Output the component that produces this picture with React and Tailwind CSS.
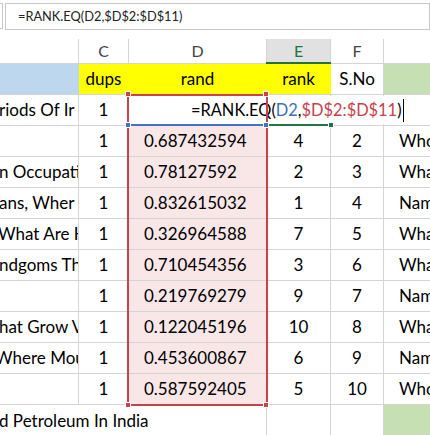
import React from 'react';

const rows = [
  { a: 'riods Of Ir', c: '1', d: '', e: '', f: '', g: '', ml: '-ml-[1px]' },
  { a: '', c: '1', d: '0.687432594', e: '4', f: '2', g: 'Who', ml: '' },
  { a: 'n Occupati', c: '1', d: '0.78127592', e: '2', f: '3', g: 'Wha', ml: '-ml-[1px]' },
  { a: 'ans, Wher', c: '1', d: '0.832615032', e: '1', f: '4', g: 'Nam', ml: '-ml-[1px]' },
  { a: 'What Are H', c: '1', d: '0.326964588', e: '7', f: '5', g: 'Wha', ml: '-ml-[2px]' },
  { a: 'ndgoms Th', c: '1', d: '0.710454356', e: '3', f: '6', g: 'Wha', ml: '-ml-[1px]' },
  { a: '', c: '1', d: '0.219769279', e: '9', f: '7', g: 'Nam', ml: '' },
  { a: 'hat Grow V', c: '1', d: '0.122045196', e: '10', f: '8', g: 'Wha', ml: '-ml-[1px]' },
  { a: 'Where Mou', c: '1', d: '0.453600867', e: '6', f: '9', g: 'Nam', ml: '-ml-[5px]' },
  { a: '', c: '1', d: '0.587592405', e: '5', f: '10', g: 'Who', ml: '' },
];

const Handle = ({ className }) => (
  <div className={`absolute w-[6px] h-[6px] border border-white ${className}`} />
);

export default function App() {
  return (
    <div
      className="relative w-[430px] h-[435px] overflow-hidden bg-white text-black"
      style={{ fontFamily: 'Lato, "Open Sans", sans-serif' }}
    >
      {/* formula bar */}
      <div className="h-[39px] flex pt-[3px]">
        <div className="w-[3px] h-[26px] border-r border-y border-[#c6c6c6] bg-white" />
        <div className="ml-[2px] flex-1 h-[27px] border border-[#c6c6c6] flex items-center pl-[12px] text-[12.8px] text-[#222]">
          =RANK.EQ(D2,$D$2:$D$11)
        </div>
      </div>

      {/* column headers */}
      <div className="flex h-[25px] border-b border-[#d4d4d4] text-[16px] text-[#444]">
        <div className="w-[79px] border-r border-[#d4d4d4]" />
        <div className="w-[50px] border-r border-[#d4d4d4] flex items-center justify-center">C</div>
        <div className="w-[138px] border-r border-[#d4d4d4] flex items-center justify-center">D</div>
        <div className="w-[64px] border-r border-[#d4d4d4] bg-[#e1e1e1] flex items-center justify-center text-[#217346]">E</div>
        <div className="w-[53px] border-r border-[#d4d4d4] flex items-center justify-center">F</div>
        <div className="flex-1" />
      </div>

      {/* header row */}
      <div className="flex h-[31px] border-b border-[#d4d4d4] text-[17px]">
        <div className="w-[79px] bg-[#bdd7ee] border-r border-[#bdd7ee]" />
        <div className="w-[50px] bg-[#ffff00] border-r border-[#ffff00] flex items-center justify-center">dups</div>
        <div className="w-[138px] bg-[#ffff00] border-r border-[#ffff00] flex items-center justify-center">rand</div>
        <div className="w-[64px] bg-[#ffff00] border-r border-[#ffff00] flex items-center justify-center">rank</div>
        <div className="w-[53px] border-r border-[#d4d4d4] flex items-center justify-center">S.No</div>
        <div className="flex-1 bg-[#c6e0b4]" />
      </div>

      {/* data rows */}
      {rows.map((r, i) => (
        <div key={i} className="flex h-[31px] border-b border-[#d4d4d4] text-[17px]">
          <div className="w-[79px] border-r border-[#d4d4d4] overflow-hidden whitespace-nowrap flex items-center">
            <span className={r.ml}>{r.a}</span>
          </div>
          <div className="w-[50px] border-r border-[#d4d4d4] flex items-center justify-center">{r.c}</div>
          <div className={`w-[138px] border-r border-[#d4d4d4] flex items-center pl-[15px] ${i > 0 ? 'bg-[#f9e6e7]' : ''}`}>
            {r.d}
          </div>
          <div className="w-[64px] border-r border-[#d4d4d4] flex items-center justify-center">{r.e}</div>
          <div className="w-[53px] border-r border-[#d4d4d4] flex items-center justify-center">{r.f}</div>
          <div className="flex-1 flex items-center pl-[15px] overflow-hidden whitespace-nowrap">{r.g}</div>
        </div>
      ))}

      {/* last row with overflowing text */}
      <div className="flex h-[31px] text-[17px]">
        <div className="w-[267px] border-r border-[#d4d4d4] flex items-center whitespace-nowrap">
          <span className="-ml-[1px]">d Petroleum In India</span>
        </div>
        <div className="w-[64px] border-r border-[#d4d4d4]" />
        <div className="w-[53px] border-r border-[#d4d4d4]" />
        <div className="flex-1 bg-[#c6e0b4]" />
      </div>

      {/* selection: green under E header */}
      <div className="absolute left-[266px] top-[62px] w-[65px] h-[2px] bg-[#217346]" />

      {/* in-cell editor */}
      <div className="absolute left-[130px] top-[96px] w-[300px] h-[28px] bg-white flex items-center pl-[61px] text-[16.4px] whitespace-nowrap">
        <span>=RANK.EQ(</span>
        <span className="text-[#3c6fc4]">D2</span>
        <span>,</span>
        <span className="text-[#c8414c]">$D$2:$D$11</span>
        <span>)</span>
        <span className="ml-[1px] w-[1px] h-[23px] bg-black" />
      </div>

      {/* range reference D2:D11 */}
      <div className="absolute left-[127px] top-[94px] w-[141px] h-[312px] border-2 border-[#c8414c]" />
      <div className="absolute left-[129px] top-[124px] w-[137px] h-[2px] bg-[#4472c4]" />
      <div className="absolute left-[268px] top-[124px] w-[63px] h-[2px] bg-[#217346]" />

      <Handle className="left-[125px] top-[91px] bg-[#c8414c]" />
      <Handle className="left-[263px] top-[91px] bg-[#c8414c]" />
      <Handle className="left-[125px] top-[402px] bg-[#c8414c]" />
      <Handle className="left-[263px] top-[402px] bg-[#c8414c]" />
      <Handle className="left-[125px] top-[122px] bg-[#4472c4]" />
      <Handle className="left-[263px] top-[122px] bg-[#4472c4]" />
      <Handle className="left-[328px] top-[122px] bg-[#217346]" />
    </div>
  );
}
